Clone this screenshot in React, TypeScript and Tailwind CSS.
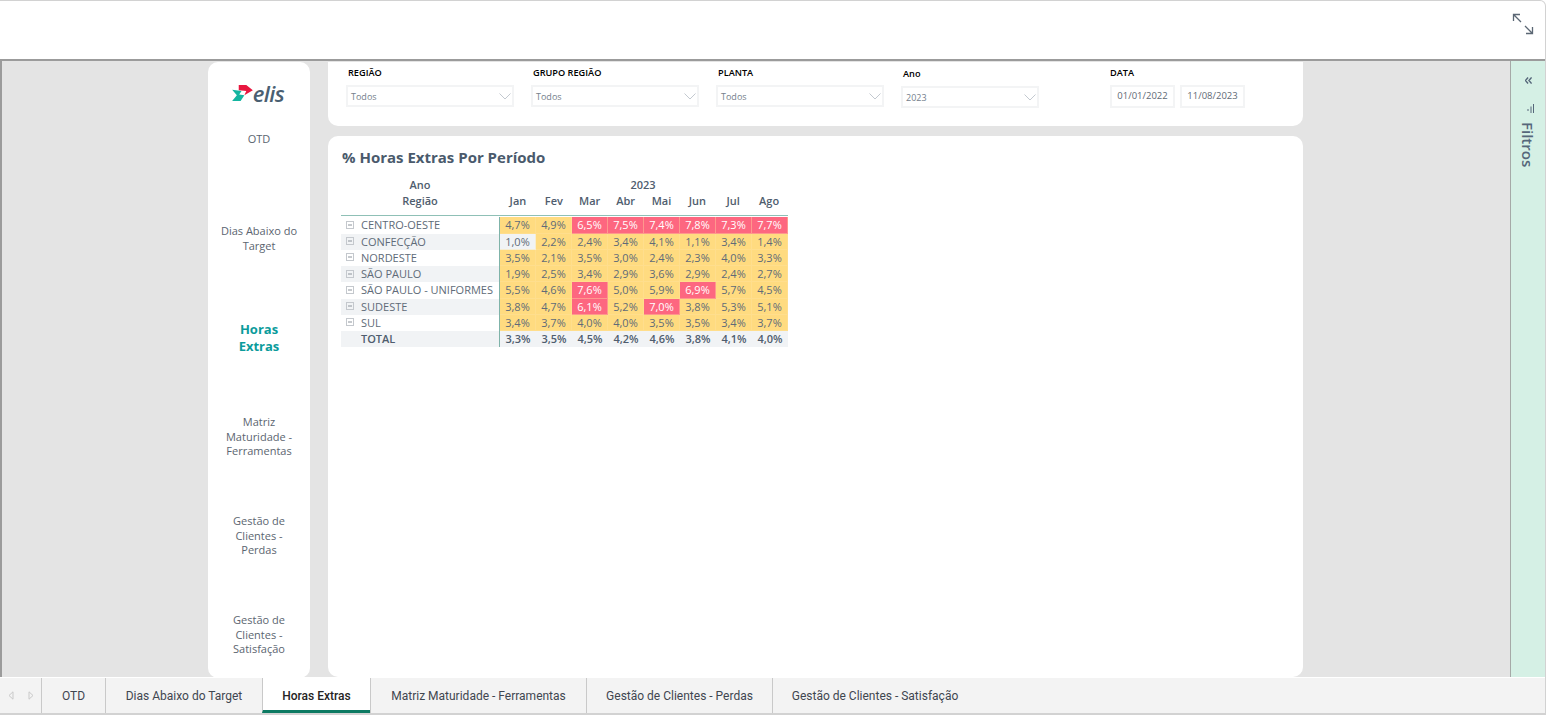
const months = ['Jan', 'Fev', 'Mar', 'Abr', 'Mai', 'Jun', 'Jul', 'Ago'];

// value rows of the matrix, red cells are the ones above 6%
const rows = [
  { name: 'CENTRO-OESTE', values: ['4,7%', '4,9%', '6,5%', '7,5%', '7,4%', '7,8%', '7,3%', '7,7%'] },
  { name: 'CONFECÇÃO', values: ['1,0%', '2,2%', '2,4%', '3,4%', '4,1%', '1,1%', '3,4%', '1,4%'] },
  { name: 'NORDESTE', values: ['3,5%', '2,1%', '3,5%', '3,0%', '2,4%', '2,3%', '4,0%', '3,3%'] },
  { name: 'SÃO PAULO', values: ['1,9%', '2,5%', '3,4%', '2,9%', '3,6%', '2,9%', '2,4%', '2,7%'] },
  { name: 'SÃO PAULO - UNIFORMES', values: ['5,5%', '4,6%', '7,6%', '5,0%', '5,9%', '6,9%', '5,7%', '4,5%'] },
  { name: 'SUDESTE', values: ['3,8%', '4,7%', '6,1%', '5,2%', '7,0%', '3,8%', '5,3%', '5,1%'] },
  { name: 'SUL', values: ['3,4%', '3,7%', '4,0%', '4,0%', '3,5%', '3,5%', '3,4%', '3,7%'] },
];

const totals = ['3,3%', '3,5%', '4,5%', '4,2%', '4,6%', '3,8%', '4,1%', '4,0%'];

const navItems = [
  { label: ['OTD'] },
  { label: ['Dias Abaixo do', 'Target'] },
  { label: ['Horas', 'Extras'], active: true },
  { label: ['Matriz', 'Maturidade -', 'Ferramentas'] },
  { label: ['Gestão de', 'Clientes -', 'Perdas'] },
  { label: ['Gestão de', 'Clientes -', 'Satisfação'] },
];

const tabs = [
  { label: 'OTD', width: 'w-[64px]' },
  { label: 'Dias Abaixo do Target', width: 'w-[157px]' },
  { label: 'Horas Extras', width: 'w-[108px]', active: true },
  { label: 'Matriz Maturidade - Ferramentas', width: 'w-[216px]' },
  { label: 'Gestão de Clientes - Perdas', width: 'w-[186px]' },
  { label: 'Gestão de Clientes - Satisfação', width: 'w-[205px]' },
];

function cellColor(value: string) {
  const n = parseFloat(value.replace(',', '.'));
  if (n > 6) return 'bg-[#fd6780] text-white';
  if (n <= 1) return 'bg-[#f1f3f5] text-[#606b78]';
  return 'bg-[#ffdb80] text-[#606b78]';
}

function Chevron() {
  return (
    <svg width="12" height="7" viewBox="0 0 12 7" fill="none" stroke="#c3c9d0" strokeWidth="1">
      <path d="M0.5 0.5 L6 6 L11.5 0.5" />
    </svg>
  );
}

function Slicer({ label, value, width, offset }: { label: string; value: string; width: string; offset?: boolean }) {
  return (
    <div className={`${width} ${offset ? 'pt-[5px]' : 'pt-[4px]'}`}>
      <div className="pl-[2px] text-[9.2px] leading-[13px] font-semibold text-black">{label}</div>
      <div className="mt-[6px] flex h-[22px] items-center justify-between border-2 border-[#f3f4f5] pr-[1px] pl-[3px] text-[9px] text-[#75808c]">
        <span className="pt-[1px]">{value}</span>
        <Chevron />
      </div>
    </div>
  );
}

function DateBox({ value }: { value: string }) {
  return (
    <div className="flex h-[23px] w-[65px] items-center justify-center border-2 border-[#f3f4f5] text-[9.5px] text-[#5f6a75]">
      {value}
    </div>
  );
}

function ExpandMark() {
  return (
    <svg width="9" height="9" viewBox="0 0 9 9" fill="none" className="ml-[5px] shrink-0">
      <rect x="0.5" y="0.5" width="7" height="7" stroke="#c4c8cd" />
      <path d="M2 4 H6" stroke="#8d949c" />
    </svg>
  );
}

function Logo() {
  return (
    <div className="flex h-[28px] items-center justify-center pr-[2px]">
      <svg width="21" height="16" viewBox="0 0 22 17">
        <path d="M7 0 H15 L22 5.5 L13 11 L15 6.5 L7 5.5 Z" fill="#e8173f" />
        <path d="M0 5 L10 6.5 L7.5 10 L13 11 L9 17 H0 L5 11 Z" fill="#14b5a0" />
      </svg>
      <span className="text-[22px] leading-none font-semibold italic tracking-[-0.6px] text-[#4a6072]">elis</span>
    </div>
  );
}

function Sidebar() {
  return (
    <div className="flex h-[616px] w-[102px] flex-col rounded-[10px] bg-white pt-[17px]">
      <div className="mb-[-16.5px]">
        <Logo />
      </div>
      {navItems.map(item => (
        <div
          key={item.label.join(' ')}
          className={`flex h-[99px] shrink-0 flex-col items-center justify-center text-center ${
            item.active
              ? 'text-[13px] leading-[17px] font-bold text-[#0b9b9b]'
              : 'text-[11px] leading-[14.6px] text-[#5b6570]'
          } ${item.label.length === 1 ? 'pb-[2px]' : ''}`}
        >
          {item.label.map(line => (
            <span key={line}>{line}</span>
          ))}
        </div>
      ))}
    </div>
  );
}

function FiltersCard() {
  return (
    <div className="flex h-[64px] rounded-b-[10px] bg-white pl-[18px]">
      <div className="flex gap-[17px]">
        <Slicer label="REGIÃO" value="Todos" width="w-[168px]" />
        <Slicer label="GRUPO REGIÃO" value="Todos" width="w-[168px]" />
        <Slicer label="PLANTA" value="Todos" width="w-[168px]" />
        <Slicer label="Ano" value="2023" width="w-[138px]" offset />
      </div>
      <div className="ml-[71px] pt-[4px]">
        <div className="text-[9.2px] leading-[13px] font-semibold text-black">DATA</div>
        <div className="mt-[6px] flex gap-[5px]">
          <DateBox value="01/01/2022" />
          <DateBox value="11/08/2023" />
        </div>
      </div>
    </div>
  );
}

function Matrix() {
  return (
    <div className="mt-[10px] ml-[13px] w-[447px] text-[11px]">
      <div className="flex h-[39px] border-b border-[#8fc0b6] font-semibold text-[#4f5d6e]">
        <div className="w-[158px] text-center leading-[16.5px]">
          <div>Ano</div>
          <div>Região</div>
        </div>
        <div className="w-[288px] leading-[16.5px]">
          <div className="text-center">2023</div>
          <div className="flex pl-[1px]">
            {months.map(m => (
              <div key={m} className="w-[36px] text-center">{m}</div>
            ))}
          </div>
        </div>
      </div>
      <div className="mt-[1.4px]">
        {rows.map((row, i) => (
          <div key={row.name} className={`flex h-[16.25px] leading-[16.25px] ${i % 2 === 1 ? 'bg-[#f1f3f5]' : ''}`}>
            <div className="flex w-[158px] items-center text-[#606b78]">
              <ExpandMark />
              <span className="ml-[6px] whitespace-nowrap">{row.name}</span>
            </div>
            <div className="w-[1px] bg-[#7fb3a9]" />
            {row.values.map((v, j) => (
              <div key={j} className={`w-[36px] border-r border-b border-[#ffe3a0]/40 text-center ${cellColor(v)}`}>
                {v}
              </div>
            ))}
          </div>
        ))}
        <div className="flex h-[16.25px] bg-[#f1f3f5] leading-[16.25px] font-semibold text-[#4f5d6e]">
          <div className="w-[158px] pl-[20px]">TOTAL</div>
          <div className="w-[1px] bg-[#7fb3a9]" />
          {totals.map((v, j) => (
            <div key={j} className="w-[36px] text-center">{v}</div>
          ))}
        </div>
      </div>
    </div>
  );
}

function FiltersPane() {
  return (
    <div className="flex w-[35px] flex-col items-center border-l border-[#a5a9a7] bg-[#d5f0e5] text-[#56677a]">
      <svg width="7" height="7" viewBox="0 0 8 8" fill="none" stroke="#56677a" strokeWidth="1.6" className="mt-[16px]">
        <path d="M3.5 0.5 L0.5 4 L3.5 7.5 M7.5 0.5 L4.5 4 L7.5 7.5" />
      </svg>
      <svg width="8" height="9" viewBox="0 0 8 9" fill="none" stroke="#56677a" strokeWidth="1" className="mt-[20px] ml-[3px]">
        <path d="M7.5 0 V9 M5 2.5 V9 M2 5 V7" />
      </svg>
      <span className="mt-[9px] text-[15px] leading-[16px] font-semibold [writing-mode:vertical-rl]">Filtros</span>
    </div>
  );
}

function TabBar() {
  return (
    <div className="flex h-[36px] border-t border-white bg-[#f3f3f3] font-['Roboto',sans-serif] text-[12px] text-[#3f4650]">
      <div className="flex w-[41px] items-center gap-[14px] pl-[8px]">
        <svg width="6" height="9" viewBox="0 0 6 9" fill="none" stroke="#c9c9c9"><path d="M5 0.8 L1 4.5 L5 8.2 Z" /></svg>
        <svg width="6" height="9" viewBox="0 0 6 9" fill="none" stroke="#c9c9c9"><path d="M1 0.8 L5 4.5 L1 8.2 Z" /></svg>
      </div>
      {tabs.map(tab => (
        <div
          key={tab.label}
          className={`${tab.width} flex items-center justify-center border-l border-[#c9c9c9] whitespace-nowrap ${
            tab.active ? 'border-b-[3px] border-b-[#0c7a62] bg-white pt-[3px] font-medium text-[#252423]' : ''
          }`}
        >
          {tab.label}
        </div>
      ))}
    </div>
  );
}

export default function App() {
  return (
    <div className="h-[716px] w-[1549px] bg-white font-['Open_Sans','Noto_Sans',sans-serif]">
      <div className="flex h-[715px] w-[1546px] flex-col rounded-tr-[6px] border-t border-r border-b-2 border-[#d2d2d2]">
        <div className="flex h-[58px] justify-end">
          <svg width="22" height="22" viewBox="0 0 22 22" fill="none" stroke="#5b6774" strokeWidth="1.3" className="mt-[12px] mr-[11px]">
            <path d="M1.5 8 V1.5 H8 M1.5 1.5 L9 9 M13 13 L20.5 20.5 M20.5 14 V20.5 H14" />
          </svg>
        </div>
        <div className="flex min-h-0 flex-1 border-t-2 border-l-2 border-[#9b9b9b]">
          <div className="flex flex-1 gap-[18px] bg-[#e4e4e4] pl-[206px]">
            <div className="pt-[1px]">
              <Sidebar />
            </div>
            <div className="flex w-[975px] flex-col gap-[10px] pt-[1px]">
              <FiltersCard />
              <div className="h-[542px] rounded-[10px] bg-white pt-[11px]">
                <div className="pl-[14px] text-[15px] leading-[20px] font-bold text-[#4a5a6c]">% Horas Extras Por Período</div>
                <Matrix />
              </div>
            </div>
          </div>
          <FiltersPane />
        </div>
        <TabBar />
      </div>
    </div>
  );
}
